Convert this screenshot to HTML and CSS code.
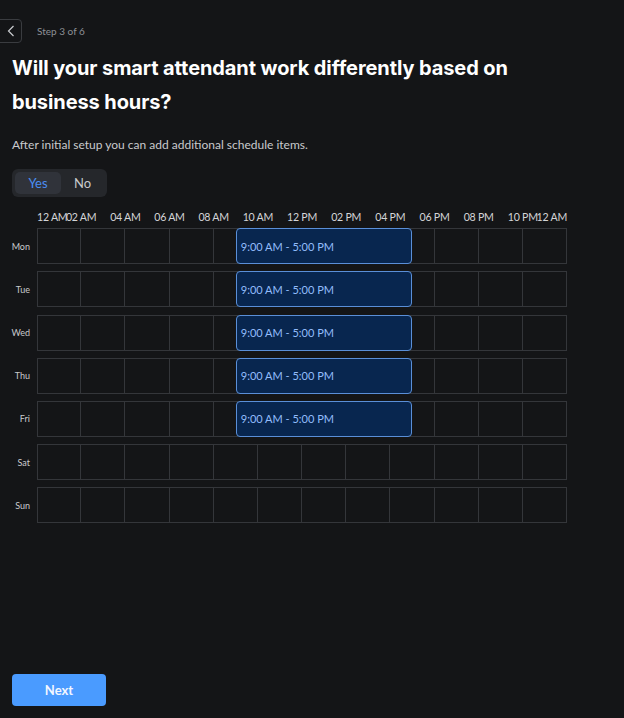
FILE: index.html
```html
<!DOCTYPE html>
<html lang="en">
<head>
<meta charset="utf-8">
<title>Schedule</title>
<link rel="stylesheet" href="styles.css">
</head>
<body>
<div class="page">
  <div class="topbar">
    <button class="back" aria-label="Back">
      <svg width="8" height="12" viewBox="0 0 8 12"><path d="M6.5 1 L1.5 6 L6.5 11" fill="none" stroke="#c9cbcf" stroke-width="1.2"/></svg>
    </button>
    <span class="step">Step 3 of 6</span>
  </div>
  <h1 class="title">Will your smart attendant work differently based on business hours?</h1>
  <p class="subtitle">After initial setup you can add additional schedule items.</p>
  <div class="toggle">
    <span class="seg active">Yes</span>
    <span class="seg">No</span>
  </div>

  <div class="schedule">
    <div class="axis">
      <div class="tick first"><b>12 AM</b></div>
      <div class="tick"><b>02 AM</b></div>
      <div class="tick"><b>04 AM</b></div>
      <div class="tick"><b>06 AM</b></div>
      <div class="tick"><b>08 AM</b></div>
      <div class="tick"><b>10 AM</b></div>
      <div class="tick"><b>12 PM</b></div>
      <div class="tick"><b>02 PM</b></div>
      <div class="tick"><b>04 PM</b></div>
      <div class="tick"><b>06 PM</b></div>
      <div class="tick"><b>08 PM</b></div>
      <div class="tick last"><b>10 PM</b><em>12 AM</em></div>
    </div>

    <div class="row"><span class="day">Mon</span><div class="track"><div class="cells"><i></i><i></i><i></i><i></i><i></i><i></i><i></i><i></i><i></i><i></i><i></i><i></i></div><div class="block">9:00 AM - 5:00 PM</div></div></div>
    <div class="row"><span class="day">Tue</span><div class="track"><div class="cells"><i></i><i></i><i></i><i></i><i></i><i></i><i></i><i></i><i></i><i></i><i></i><i></i></div><div class="block">9:00 AM - 5:00 PM</div></div></div>
    <div class="row"><span class="day">Wed</span><div class="track"><div class="cells"><i></i><i></i><i></i><i></i><i></i><i></i><i></i><i></i><i></i><i></i><i></i><i></i></div><div class="block">9:00 AM - 5:00 PM</div></div></div>
    <div class="row"><span class="day">Thu</span><div class="track"><div class="cells"><i></i><i></i><i></i><i></i><i></i><i></i><i></i><i></i><i></i><i></i><i></i><i></i></div><div class="block">9:00 AM - 5:00 PM</div></div></div>
    <div class="row"><span class="day">Fri</span><div class="track"><div class="cells"><i></i><i></i><i></i><i></i><i></i><i></i><i></i><i></i><i></i><i></i><i></i><i></i></div><div class="block">9:00 AM - 5:00 PM</div></div></div>
    <div class="row"><span class="day">Sat</span><div class="track"><div class="cells"><i></i><i></i><i></i><i></i><i></i><i></i><i></i><i></i><i></i><i></i><i></i><i></i></div></div></div>
    <div class="row"><span class="day">Sun</span><div class="track"><div class="cells"><i></i><i></i><i></i><i></i><i></i><i></i><i></i><i></i><i></i><i></i><i></i><i></i></div></div></div>
  </div>

  <div class="footer">
    <button class="next">Next</button>
  </div>
</div>
</body>
</html>
```

FILE: styles.css
```css
* { box-sizing: border-box; }
html, body {
  margin: 0;
  padding: 0;
  background: #141517;
  font-family: "Lato", "Liberation Sans", sans-serif;
  color: #e6e7e9;
  overflow: hidden;
}
.page {
  display: flex;
  flex-direction: column;
  min-height: 718px;
  padding: 19px 0 12px 12px;
}
.topbar {
  display: flex;
  align-items: center;
  height: 24px;
}
.back {
  width: 32px;
  height: 24px;
  margin-left: -22px;
  padding: 0 0 0 10px;
  display: flex;
  align-items: center;
  justify-content: center;
  background: transparent;
  border: 1px solid #3a3c40;
  border-radius: 4px;
}
.step {
  margin-left: 15px;
  font-size: 10px;
  color: #8d9096;
}
.title {
  margin: 8px 0 0;
  width: 560px;
  font-family: "Inter", "Lato", sans-serif;
  font-weight: 700;
  font-size: 20px;
  line-height: 34px;
  color: #ffffff;
  letter-spacing: -0.1px;
}
.subtitle {
  margin: 18px 0 0;
  font-size: 12px;
  line-height: 16px;
  color: #c9cacd;
}
.toggle {
  margin-top: 16px;
  display: flex;
  align-items: center;
  width: 95px;
  height: 28px;
  padding: 3px;
  background: #25272b;
  border-radius: 6px;
}
.seg {
  flex: 1;
  height: 22px;
  display: flex;
  align-items: center;
  justify-content: center;
  font-size: 13px;
  color: #c9cacd;
  border-radius: 5px;
}
.seg.active {
  flex: 0 0 46px;
  background: #30333a;
  color: #4a8ef2;
}
.schedule {
  margin-top: 12px;
  display: flex;
  flex-direction: column;
  gap: 7.2px;
}
.axis {
  margin-left: 25px;
  width: 530px;
  height: 16px;
  display: grid;
  grid-template-columns: repeat(12, minmax(0, 1fr));
  font-size: 10.6px;
  line-height: 16px;
  letter-spacing: -0.25px;
  color: #d4d5d8;
  margin-bottom: -4px;
}
.tick {
  display: flex;
  white-space: nowrap;
  min-width: 0;
}
.tick b, .tick em {
  font-weight: 400;
  font-style: normal;
}
.tick b {
  width: 0;
  display: flex;
  justify-content: center;
}
.tick.first b {
  width: auto;
  display: inline;
}
.tick.last em { margin-left: auto; }
.row {
  display: flex;
  align-items: center;
  height: 36px;
  margin-left: -12px;
}
.day {
  width: 37px;
  padding-right: 7px;
  text-align: right;
  font-size: 9px;
  color: #c9cacd;
}
.track {
  position: relative;
  width: 530px;
  height: 36px;
}
.cells {
  display: grid;
  grid-template-columns: repeat(12, 1fr);
  height: 100%;
}
.cells i {
  border: 1px solid #34363a;
  margin-left: -1px;
}
.cells i:first-child { margin-left: 0; }
.block {
  position: absolute;
  top: 0;
  bottom: 0;
  left: 37.5%;
  width: 33.3333%;
  display: flex;
  align-items: center;
  padding-left: 4px;
  background: #08264f;
  border: 1px solid #5a8fd8;
  border-radius: 4px;
  font-size: 11px;
  color: #93bdfb;
}
.footer {
  margin-top: auto;
}
.next {
  width: 94px;
  height: 32px;
  border: none;
  border-radius: 4px;
  background: #4a9bff;
  color: #f2f6ff;
  font-family: "Lato", "Liberation Sans", sans-serif;
  font-size: 13px;
  font-weight: 700;
}
```
